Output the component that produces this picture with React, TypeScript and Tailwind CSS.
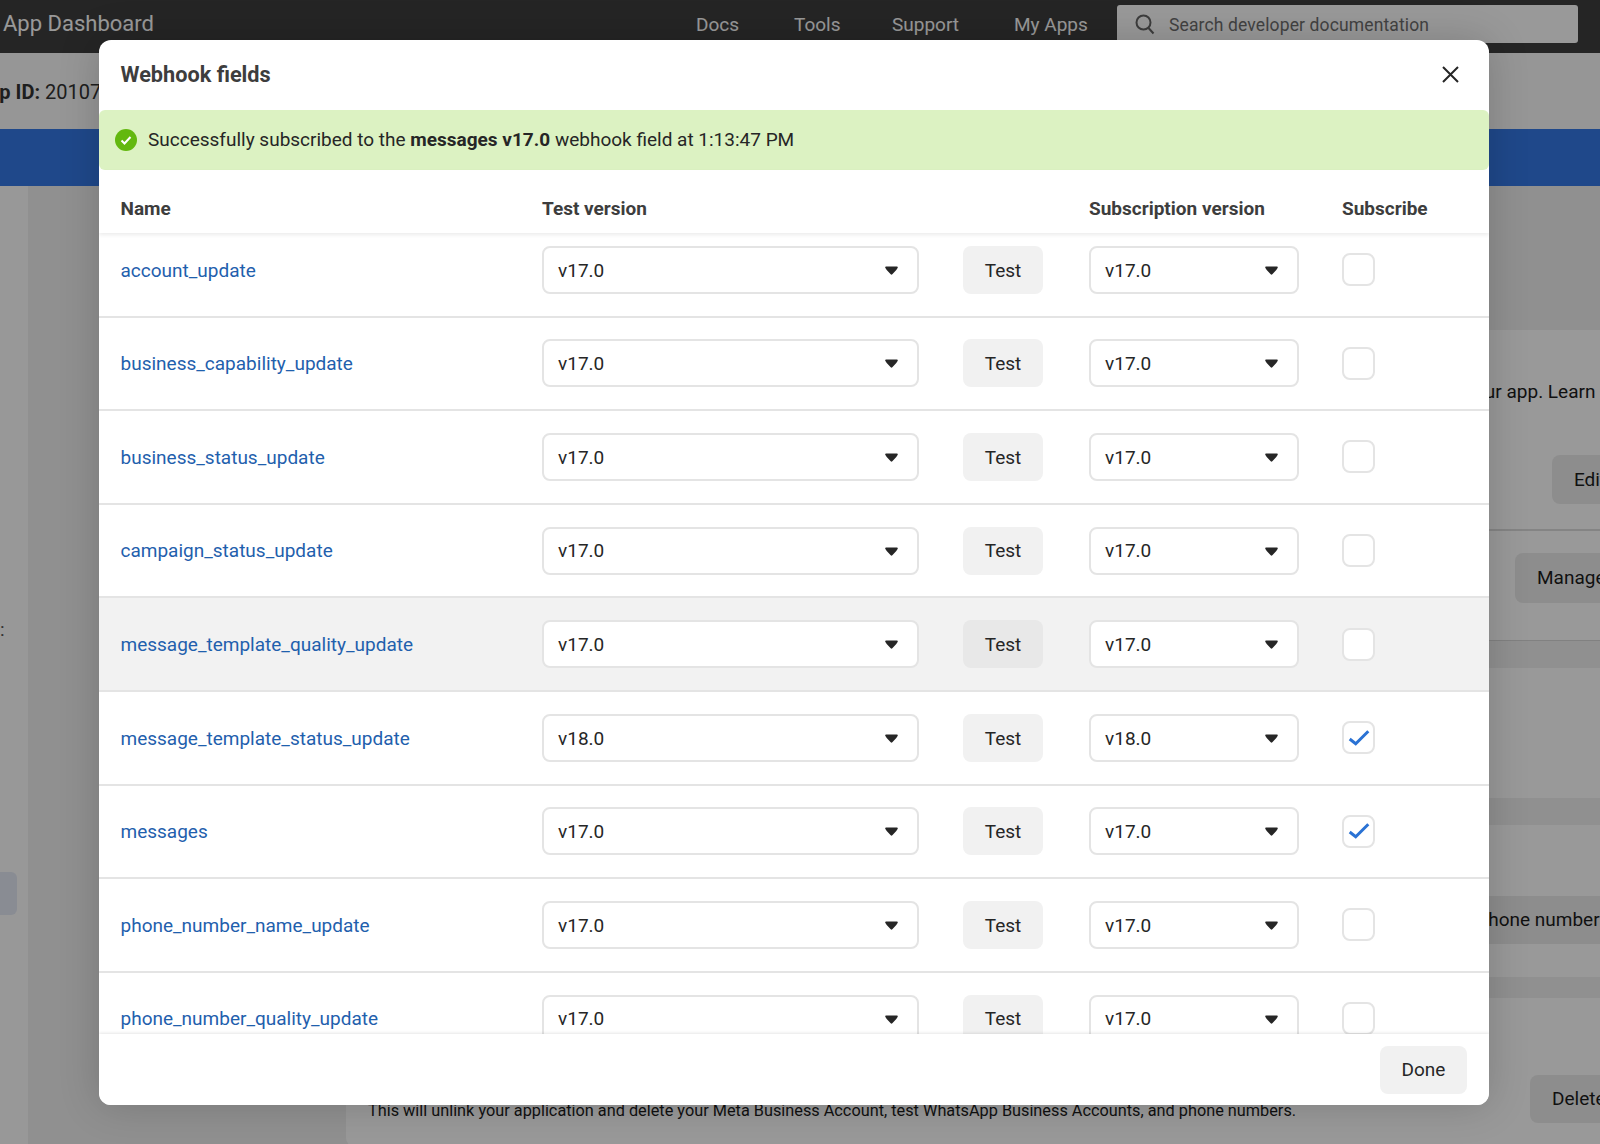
const rows = [
  { name: "account_update", version: "v17.0", checked: false },
  { name: "business_capability_update", version: "v17.0", checked: false },
  { name: "business_status_update", version: "v17.0", checked: false },
  { name: "campaign_status_update", version: "v17.0", checked: false },
  { name: "message_template_quality_update", version: "v17.0", checked: false, hover: true },
  { name: "message_template_status_update", version: "v18.0", checked: true },
  { name: "messages", version: "v17.0", checked: true },
  { name: "phone_number_name_update", version: "v17.0", checked: false },
  { name: "phone_number_quality_update", version: "v17.0", checked: false },
];

function Caret() {
  return (
    <svg width="13" height="9" viewBox="0 0 13 9" className="shrink-0 mt-[1px]">
      <path d="M1 0.5h11c.8 0 1 .8.6 1.4L11.3 4 7.3 8.3c-.4.5-1.2.5-1.6 0L1.7 4 .4 1.9C0 1.3.2.5 1 .5z" fill="#262626" />
    </svg>
  );
}

function VersionSelect({ value, width }: { value: string; width: string }) {
  return (
    <div className={`${width} h-12 shrink-0 flex items-center justify-between pl-[14px] pr-[19px] bg-white border-2 border-[#e4e4e4] rounded-[8px] text-[#262626]`}>
      <span className="pt-[2px]">{value}</span>
      <Caret />
    </div>
  );
}

function Row({ name, version, checked, hover }: { name: string; version: string; checked: boolean; hover?: boolean }) {
  return (
    <div className={`h-[93.6px] shrink-0 flex items-center pl-[21.5px] border-b-2 border-[#e4e4e4] ${hover ? "bg-[#f2f2f2]" : "bg-white"}`}>
      <a href="#" className="w-[421.5px] shrink-0 pt-[2px] text-[#1f60ad]">{name}</a>
      <VersionSelect value={version} width="w-[377px]" />
      <button className={`ml-[44px] w-[80px] h-12 shrink-0 pt-[2px] rounded-[8px] text-[#262626] ${hover ? "bg-[#e8e8e8]" : "bg-[#f1f1f1]"}`}>Test</button>
      <div className="ml-[46px]">
        <VersionSelect value={version} width="w-[210px]" />
      </div>
      <div className="ml-[43px] w-[33px] h-[33px] shrink-0 bg-white border-2 border-[#e4e4e4] rounded-[8px] flex items-center justify-center">
        {checked && (
          <svg width="32" height="32" viewBox="0 0 32 32" className="shrink-0">
            <path d="M6.7 17l6 4.7L25.3 9.3" fill="none" stroke="#2a72d4" strokeWidth="3" />
          </svg>
        )}
      </div>
    </div>
  );
}

export default function App() {
  return (
    <div className="relative h-screen w-full overflow-hidden bg-[#f0f0f0] text-[19px] text-[#1c1c1c]" style={{ fontFamily: "Roboto, sans-serif" }}>
      {/* Page behind the dialog */}
      <header className="h-[53px] bg-[#3f3f3f] flex items-center text-white">
        <div className="ml-[3px] mb-[6px] text-[22px] w-[693px] shrink-0">App Dashboard</div>
        <nav className="flex items-center text-[19px] mb-[2px] shrink-0">
          <a href="#" className="w-[98px]">Docs</a>
          <a href="#" className="w-[98px]">Tools</a>
          <a href="#" className="w-[122px]">Support</a>
          <a href="#" className="w-[103px]">My Apps</a>
        </nav>
        <div className="w-[461px] h-[38px] mb-[5px] bg-white rounded-[3px] flex items-center pl-[17px] gap-[13px] text-[#6f6f6f] text-[17.5px] tracking-[0.13px] shrink-0">
          <svg width="22" height="22" viewBox="0 0 22 22" fill="none" stroke="#666" strokeWidth="2">
            <circle cx="9.5" cy="9.5" r="7" />
            <path d="M14.5 15l5 5.5" />
          </svg>
          <span className="pt-[2px]">Search developer documentation</span>
        </div>
      </header>
      <div className="h-[76px] bg-[#fafafa] flex items-center pt-[2px]">
        <div className="-ml-[25px] whitespace-nowrap text-[20px] text-[#333]">
          <b className="font-bold">App ID:</b> 2010742
        </div>
      </div>
      <div className="h-[57px] bg-[#3478e6]" />
      <main className="flex h-[958px]">
        <aside className="w-[28px] shrink-0 bg-[#fdfdfd] overflow-hidden">
          <div className="pt-[430px] text-[#555] leading-[28px]">:</div>
          <div className="mt-[228px] -ml-[10px] w-[27px] h-[43px] rounded-[6px] bg-[#e4e9f5]" />
        </aside>
        <div className="ml-[318px] pt-[144px] w-[1320px] shrink-0 flex flex-col">
          <section className="h-[311px] shrink-0 bg-white rounded-[8px] border-b border-[#d8d8d8]">
            <div className="h-[201px] border-b-2 border-[#dcdcdc] flex flex-col items-end">
              <div className="mt-[48px] whitespace-nowrap mr-[22px]">Connect webhooks to your app. Learn more</div>
              <div className="mt-[48px] w-[114px] h-[49px] bg-[#ececec] rounded-[8px] pl-[22px] leading-[49px]">Edit</div>
            </div>
            <div className="flex justify-end pt-[22px]">
              <div className="w-[151px] h-[50px] bg-[#ececec] rounded-[8px] pl-[22px] leading-[50px]">Manage</div>
            </div>
          </section>
          <section className="mt-[27px] h-[130px] shrink-0 bg-white rounded-[8px]" />
          <section className="mt-[27px] h-[152px] shrink-0 bg-white rounded-[8px] flex justify-end pt-[71px]">
            <div className="w-[400px] h-[48px] bg-[#ececec] rounded-[8px] pl-[173px] leading-[48px] whitespace-nowrap">Add phone numbers</div>
          </section>
          <section className="mt-[21px] h-[148px] shrink-0 bg-white rounded-[8px] flex justify-between pl-[22px]">
            <p className="pt-[101px] text-[16.3px] text-[#1c1c1c] whitespace-nowrap">This will unlink your application and delete your Meta Business Account, test WhatsApp Business Accounts, and phone numbers.</p>
            <div className="mt-[77px] w-[136px] h-[48px] bg-[#ececec] rounded-[8px] pl-[22px] leading-[48px]">Delete</div>
          </section>
        </div>
      </main>

      {/* Dialog */}
      <div className="absolute inset-0 bg-black/40 pl-[99px] pt-[40px]">
        <div className="w-[1390px] h-[1065px] bg-white rounded-[12px] flex flex-col overflow-hidden shadow-[0_0_40px_rgba(0,0,0,0.18)]">
          <div className="h-[70px] shrink-0 flex items-center justify-between pl-[21.5px] pr-[30px]">
            <h2 className="mt-[1px] text-[21.7px] font-bold text-[#3d3d3d]">Webhook fields</h2>
            <svg width="17" height="17" viewBox="0 0 17 17" stroke="#262626" strokeWidth="2" fill="none" className="mb-[2px]">
              <path d="M1 1l15 15M16 1L1 16" />
            </svg>
          </div>
          <div className="h-[60px] shrink-0 bg-[#dcf2c2] rounded-[6px] flex items-center pl-[16px] gap-[11px]">
            <svg width="22" height="22" viewBox="0 0 22 22" className="shrink-0">
              <circle cx="11" cy="11" r="11" fill="#63b80f" />
              <path d="M6.5 11.5l3 3 6-6.5" fill="none" stroke="#fff" strokeWidth="2" />
            </svg>
            <span className="text-[#262626]">
              Successfully subscribed to the <b className="font-bold">messages v17.0</b> webhook field at 1:13:47 PM
            </span>
          </div>
          <div className="relative z-10 h-[63px] shrink-0 flex items-center pl-[21.5px] pt-[16px] font-bold text-[#3d3d3d] bg-white shadow-[0_2px_4px_rgba(0,0,0,0.08)]">
            <div className="w-[421.5px] shrink-0">Name</div>
            <div className="w-[547px] shrink-0">Test version</div>
            <div className="w-[253px] shrink-0">Subscription version</div>
            <div>Subscribe</div>
          </div>
          <div className="flex-1 min-h-0 overflow-hidden">
            <div className="-mt-[9px] flex flex-col">
              {rows.map((r) => (
                <Row key={r.name} name={r.name} version={r.version} checked={r.checked} hover={r.hover} />
              ))}
            </div>
          </div>
          <div className="relative z-10 h-[71px] shrink-0 bg-white flex items-start justify-end pt-[12px] pr-[22px] shadow-[0_-1px_3px_rgba(0,0,0,0.1)]">
            <button className="w-[87px] h-12 bg-[#f1f1f1] rounded-[8px] text-[#262626]">Done</button>
          </div>
        </div>
      </div>
    </div>
  );
}
